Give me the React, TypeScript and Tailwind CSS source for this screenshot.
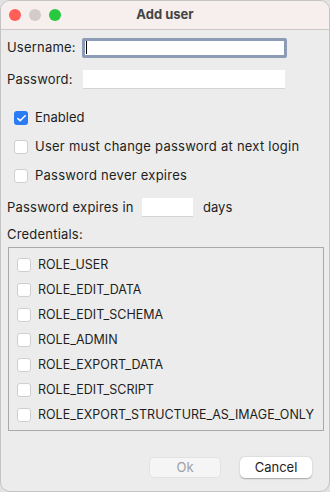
import { Check } from 'lucide-react';

const roles = [
  'ROLE_USER',
  'ROLE_EDIT_DATA',
  'ROLE_EDIT_SCHEMA',
  'ROLE_ADMIN',
  'ROLE_EXPORT_DATA',
  'ROLE_EDIT_SCRIPT',
  'ROLE_EXPORT_STRUCTURE_AS_IMAGE_ONLY',
];

function Box({ checked = false }: { checked?: boolean }) {
  if (checked) {
    return (
      <span className="w-[14px] h-[14px] rounded-[3px] bg-[#2a7bf4] flex items-center justify-center shrink-0">
        <Check className="w-[11px] h-[11px] text-white" strokeWidth={3.5} />
      </span>
    );
  }
  return <span className="w-[14px] h-[14px] rounded-[3px] bg-white border border-[#cfcfcf] shrink-0" />;
}

export default function App() {
  return (
    <div className="w-[330px] h-[492px] bg-[#e2e2e2] font-['Inter',sans-serif] text-[13px] text-[#1e1e1e]">
      <div className="w-full h-full rounded-[10px] overflow-hidden bg-[#ececec] border border-[#c4c4c4] flex flex-col">
        <div className="h-[29px] bg-[#f7efed] border-b border-[#cdc8c7] flex items-center relative shrink-0">
          <div className="flex gap-[8px] pl-[8px]">
            <span className="w-[12px] h-[12px] rounded-full bg-[#fe5f57]" />
            <span className="w-[12px] h-[12px] rounded-full bg-[#d3cbcb]" />
            <span className="w-[12px] h-[12px] rounded-full bg-[#28c840]" />
          </div>
          <div className="absolute inset-0 flex items-center justify-center font-bold text-[#444]">Add user</div>
        </div>

        <div className="flex flex-col px-[6px]">
          <div className="flex items-center mt-[8px] h-[19px]">
            <span className="w-[75px] tracking-[0.2px]">Username:</span>
            <div className="w-[205px] h-[20px] bg-white border-[3px] border-[#8d9cb5] rounded-[2px] flex items-center pl-[1px]">
              <span className="w-px h-[13px] bg-black" />
            </div>
          </div>
          <div className="flex items-center mt-[13px] h-[19px]">
            <span className="w-[76px] tracking-[0.2px]">Password:</span>
            <div className="w-[202px] h-[19px] bg-white border-b border-[#d4d4d4]" />
          </div>

          <div className="flex items-center gap-[7px] pl-[7px] mt-[22px] h-[14px]">
            <Box checked />
            <span>Enabled</span>
          </div>
          <div className="flex items-center gap-[7px] pl-[7px] mt-[15px] h-[14px]">
            <Box />
            <span className="tracking-[0.25px]">User must change password at next login</span>
          </div>
          <div className="flex items-center gap-[7px] pl-[7px] mt-[15px] h-[14px]">
            <Box />
            <span className="tracking-[0.25px]">Password never expires</span>
          </div>

          <div className="flex items-center mt-[15px] h-[19px]">
            <span className="w-[135px] tracking-[0.2px]">Password expires in</span>
            <div className="w-[51px] h-[19px] bg-white border-b border-[#d4d4d4]" />
            <span className="ml-[10px]">days</span>
          </div>

          <div className="mt-[8px] h-[19px] flex items-center tracking-[0.2px]">Credentials:</div>

          <div className="mt-[3px] ml-[1px] w-[316px] h-[184px] border border-[#a9a9a9] pt-[10px] flex flex-col gap-[11px] text-[12.5px]">
            {roles.map((r) => (
              <div key={r} className="flex items-center gap-[7px] pl-[8px] h-[14px]">
                <Box />
                <span>{r}</span>
              </div>
            ))}
          </div>
        </div>

        <div className="flex justify-end gap-[19px] pr-[17px] mt-[26px]">
          <div className="w-[72px] h-[21px] rounded-[5px] bg-[#f5f5f5] border border-[#e2e2e2] flex items-center justify-center text-[#a0a0a0]">Ok</div>
          <div className="w-[72px] h-[21px] rounded-[5px] bg-white shadow-[0_0.5px_1.5px_rgba(0,0,0,0.3)] flex items-center justify-center">Cancel</div>
        </div>
      </div>
    </div>
  );
}
